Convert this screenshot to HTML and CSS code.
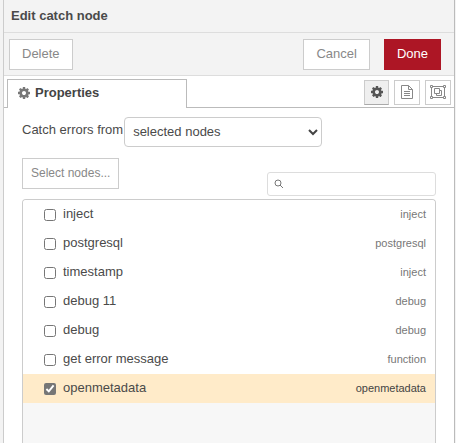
FILE: index.html
```html
<!DOCTYPE html>
<html lang="en">
<head>
<meta charset="utf-8">
<title>Edit catch node</title>
<link rel="stylesheet" href="styles.css">
</head>
<body>
<svg class="sprite" aria-hidden="true">
  <symbol id="cog" viewBox="0 0 1792 1792"><path d="M1152 896q0-106-75-181t-181-75-181 75-75 181 75 181 181 75 181-75 75-181zm512-109v222q0 12-8 23t-20 13l-185 28q-19 54-39 91 35 50 107 138 10 12 10 25t-9 23q-27 37-99 108t-94 71q-12 0-26-9l-138-108q-44 23-91 38-16 136-29 186-7 28-36 28h-222q-14 0-24.500-8.500t-11.500-21.500l-28-184q-49-16-90-37l-141 107q-10 9-25 9-14 0-25-11-126-114-165-168-7-10-7-23 0-12 8-23 15-21 51-66.500t54-70.500q-27-50-41-99l-183-27q-13-2-21-12.500t-8-23.500v-222q0-12 8-23t19-13l186-28q14-46 39-92-40-57-107-138-10-12-10-24 0-10 9-23 26-36 98.500-107.500t94.500-71.500q13 0 26 10l138 107q44-23 91-38 16-136 29-186 7-28 36-28h222q14 0 24.500 8.500t11.500 21.500l28 184q49 16 90 37l142-107q9-9 24-9 13 0 25 10 129 119 165 170 7 8 7 22 0 12-8 23-15 21-51 66.500t-54 70.500q26 50 41 98l183 28q13 2 21 12.500t8 23.500z"/></symbol>
</svg>
<main class="tray">
  <header class="tray-header"><h1>Edit catch node</h1></header>
  <div class="toolbar">
    <button class="btn btn-delete" type="button">Delete</button>
    <button class="btn btn-cancel" type="button">Cancel</button>
    <button class="btn btn-done" type="button">Done</button>
  </div>
  <nav class="tabs">
    <a class="tab" href="#properties"><svg class="icon"><use href="#cog"/></svg>Properties</a>
    <div class="tab-buttons">
      <button class="tab-button active" type="button" aria-label="Properties"><svg class="icon"><use href="#cog"/></svg></button>
      <button class="tab-button" type="button" aria-label="Description">
        <svg class="icon-file" viewBox="0 0 12 14"><path d="M.5.5h7l4 4v9H.5zM7.500.5v4h4M3 6.500h6M3 8.500h6M3 10.500h6"/></svg>
      </button>
      <button class="tab-button" type="button" aria-label="Appearance">
        <svg class="icon-group" viewBox="0 0 16 14"><path d="M2.500 1.500h11M2.500 12.500h11M1.500 2.500v9M14.500 2.500v9M.5.500h2v2h-2zM13.500.500h2v2h-2zM.5 11.500h2v2h-2zM13.500 11.500h2v2h-2zM4.500 3.500h5v5h-5zM9.500 5.500h2v5h-5v-2"/></svg>
      </button>
    </div>
  </nav>
  <section class="content" id="properties">
    <div class="form-row">
      <label for="scope">Catch errors from</label>
      <div class="select-wrap">
        <select id="scope"><option>selected nodes</option><option>all nodes</option></select>
        <svg class="chevron" viewBox="0 0 10 7"><path d="M1 1l4 4 4-4"/></svg>
      </div>
    </div>
    <div class="filter-row">
      <button class="btn btn-select" type="button">Select nodes...</button>
      <div class="search">
        <svg class="icon-search" viewBox="0 0 10 10"><circle cx="4" cy="4" r="3"/><path d="M6 6l3 3"/></svg>
        <input type="text" aria-label="Search nodes">
      </div>
    </div>
    <ul class="node-list">
      <li><label><input type="checkbox"><span class="name">inject</span><span class="type">inject</span></label></li>
      <li><label><input type="checkbox"><span class="name">postgresql</span><span class="type">postgresql</span></label></li>
      <li><label><input type="checkbox"><span class="name">timestamp</span><span class="type">inject</span></label></li>
      <li><label><input type="checkbox"><span class="name">debug 11</span><span class="type">debug</span></label></li>
      <li><label><input type="checkbox"><span class="name">debug</span><span class="type">debug</span></label></li>
      <li><label><input type="checkbox"><span class="name">get error message</span><span class="type">function</span></label></li>
      <li class="selected"><label><input type="checkbox" checked><span class="name">openmetadata</span><span class="type">openmetadata</span></label></li>
    </ul>
  </section>
</main>
</body>
</html>
```
FILE: styles.css
```css
* { box-sizing: border-box; }

body {
  margin: 0;
  padding: 0 1px 0 3px;
  height: 100vh;
  overflow: hidden;
  background: #f3f3f3;
  color: #4a4a4a;
  font: 13px/20px "Liberation Sans", Arial, sans-serif;
}

button, input, select { font: inherit; color: inherit; margin: 0; }

.sprite { position: absolute; width: 0; height: 0; }

.tray {
  display: flex;
  flex-direction: column;
  height: 100%;
  background: #fff;
  border: solid #bbb;
  border-width: 0 1px;
  border-left-color: #ccc;
}

.tray-header {
  padding: 6px 7px;
  background: #f3f3f3;
  border-bottom: 1px solid #ddd;
}

.tray-header h1 { margin: 0; font-size: 13px; line-height: 20px; }

.toolbar {
  display: flex;
  align-items: center;
  height: 43px;
  padding: 0 13px 0 5px;
  background: #f3f3f3;
  border-bottom: 1px solid #ddd;
}

.btn {
  height: 31px;
  padding: 0 12px;
  background: #fff;
  border: 1px solid #ccc;
  border-radius: 0;
  color: #888;
}

.btn-delete { margin-right: auto; }
.btn-cancel { margin-right: 14px; }
.btn-done { background: #ad1625; border-color: #ad1625; color: #fff; }

.tabs {
  display: flex;
  align-items: flex-end;
  justify-content: space-between;
  height: 32px;
  padding: 0 3px;
  background: linear-gradient(#bbb, #bbb) bottom / 100% 1px no-repeat;
}

.tab {
  display: flex;
  align-items: center;
  gap: 4px;
  width: 180px;
  height: 29px;
  padding: 0 9px 2px;
  background: #fff;
  border: 1px solid #bbb;
  border-bottom: 0;
  color: #444;
  font-weight: bold;
  text-decoration: none;
}

.icon { width: 14px; height: 14px; fill: #777; }

.tab-buttons { display: flex; gap: 5px; padding-bottom: 3px; }

.tab-button {
  display: flex;
  align-items: center;
  justify-content: center;
  width: 26px;
  height: 25px;
  padding: 0 0 2px;
  background: #fff;
  border: 1px solid #ccc;
}

.tab-button.active { width: 25px; background: #efefef; border-bottom-color: #aaa; }
.tab-button.active .icon { fill: #555; }

.icon-file, .icon-group { height: 14px; fill: none; stroke: #888; stroke-width: 1; }
.icon-file { width: 12px; }
.icon-group { width: 16px; flex: none; }

.content {
  display: flex;
  flex-direction: column;
  flex: 1;
  min-height: 0;
  padding: 9px 18px 0;
}

.form-row { display: flex; align-items: center; }
.form-row > label { padding-bottom: 4px; margin-right: 1px; }

.select-wrap { position: relative; width: 198px; }

.select-wrap select {
  display: block;
  width: 100%;
  height: 30px;
  padding: 0 8px;
  appearance: none;
  background: #fff;
  border: 1px solid #ccc;
  border-radius: 4px;
}

.chevron {
  position: absolute;
  right: 4px;
  top: 12px;
  width: 10px;
  height: 7px;
  fill: none;
  stroke: #444;
  stroke-width: 2;
  pointer-events: none;
}

.filter-row {
  display: flex;
  align-items: flex-end;
  justify-content: space-between;
  height: 49px;
}

.btn-select { align-self: flex-start; margin-top: 11px; padding: 0 8px 2px; font-size: 12px; }

.search {
  display: flex;
  align-items: center;
  gap: 4px;
  width: 169px;
  height: 24px;
  padding: 0 6px;
  border: 1px solid #ddd;
  border-radius: 3px;
}

.search input { flex: 1; min-width: 0; border: 0; padding: 0; outline: 0; background: none; }
.icon-search { width: 10px; height: 10px; fill: none; stroke: #777; stroke-width: 1; }

.node-list {
  flex: 1;
  margin: 3px 0 0;
  padding: 0;
  list-style: none;
  overflow: hidden;
  background: #f7f7f7;
  border: 1px solid #ccc;
  border-bottom: 0;
  border-radius: 4px 4px 0 0;
}

.node-list li { background: #fff; }
.node-list li.selected { background: #ffebc9; }

.node-list label {
  display: flex;
  align-items: center;
  height: 29px;
  padding: 0 9px 0 21px;
}

.node-list input { width: 12px; height: 12px; accent-color: #767676; }
.name { margin-left: 7px; padding-bottom: 1px; }
.type { margin-left: auto; padding-bottom: 1px; color: #777; font-size: 11px; }
.selected .type { color: #444; }
```
